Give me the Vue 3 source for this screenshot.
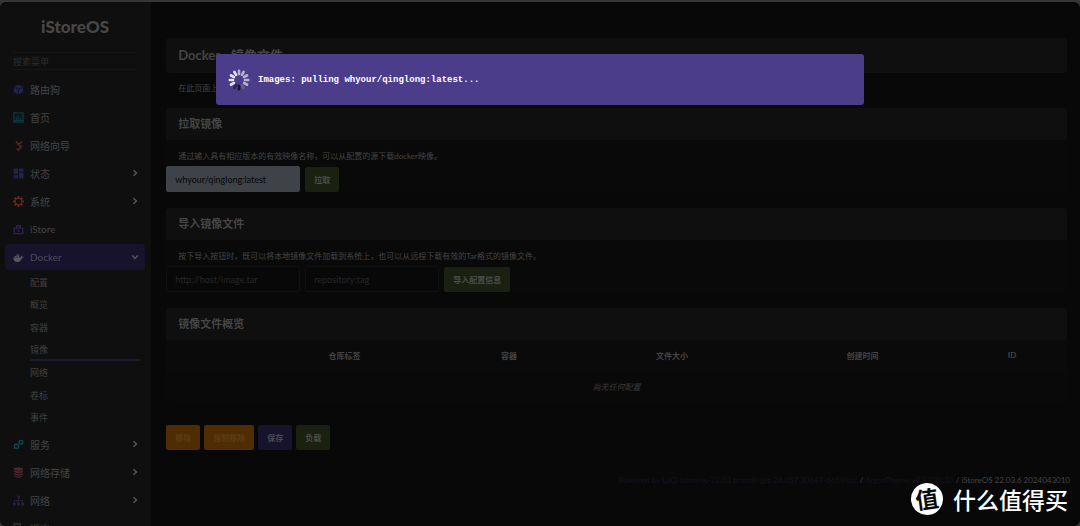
<script setup>
const topMenu = [
  { label: '路由狗', icon: 'cube' },
  { label: '首页', icon: 'chart' },
  { label: '网络向导', icon: 'guide' },
  { label: '状态', icon: 'dash', more: true },
  { label: '系统', icon: 'gear', more: true },
  { label: 'iStore', icon: 'bag' },
  { label: 'Docker', icon: 'whale', open: true,
    children: ['配置', '概览', '容器', '镜像', '网络', '卷标', '事件'] },
  { label: '服务', icon: 'cogs', more: true },
  { label: '网络存储', icon: 'disks', more: true },
  { label: '网络', icon: 'tree', more: true },
  { label: '退出', icon: 'exit' }
]
const activeChild = '镜像'
const columns = ['', '仓库标签', '容器', '文件大小', '创建时间', 'ID']
const teeth = [0, 45, 90, 135, 180, 225, 270, 315]
const spokes = Array.from({ length: 12 }, (_, i) => ({
  angle: i * 30,
  color: i === 5 ? '#6a5f86' : i === 6 ? '#17122e' : i === 7 ? '#2c2450' : i < 5 ? '#b9b1d2' : '#e4e0f0'
}))
</script>

<template>
  <div class="frame">
    <div class="app">
      <aside class="side">
        <a class="brand" href="#">iStoreOS</a>
        <input class="search" type="text" placeholder="搜索菜单" aria-label="搜索菜单">
        <nav>
          <ul class="menu">
            <li v-for="m in topMenu" :key="m.icon">
              <a href="#" class="item" :class="{ open: m.open }">
                <svg class="ico" viewBox="0 0 12 12" aria-hidden="true">
                  <g v-if="m.icon === 'cube'">
                    <path fill="#20234f" d="M6 .5 11 3v5.8L6 11.5 1 8.800V3z" />
                    <path d="M1.500 3.400 6 5.600l4.500-2.200M6 5.600v5.400" fill="none" stroke="#0f0f12" stroke-width=".8" />
                  </g>
                  <g v-else-if="m.icon === 'chart'" fill="none" stroke="#0c4048" stroke-width="1.200">
                    <rect x="1" y="1" width="10" height="10" />
                    <path d="M3.500 5v4M5.700 3.500V9M8 6v3M9 3.500v1" />
                    <path d="M1 9.500h10" />
                  </g>
                  <g v-else-if="m.icon === 'guide'" fill="none" stroke="#57231b" stroke-width="1.700">
                    <path d="M3.200 1.300 5.500 4.500 10 2M5.500 4.500 9 7.200 6.200 10.800 4 9.500" />
                  </g>
                  <g v-else-if="m.icon === 'dash'" fill="#20234f">
                    <path d="M.5.500h5v6h-5zM6.500.500h5v3.500h-5zM.5 7.500h5v4h-5zM6.500 5h5v6.500h-5z" />
                  </g>
                  <g v-else-if="m.icon === 'gear'">
                    <circle cx="6" cy="6" r="3.700" fill="none" stroke="#6a291c" stroke-width="1.400" />
                    <rect v-for="t in teeth" :key="t" x="5" y="0" width="2" height="2" fill="#6a291c"
                      :transform="`rotate(${t} 6 6)`" />
                  </g>
                  <g v-else-if="m.icon === 'bag'" fill="none" stroke="#2a2150" stroke-width="1.600">
                    <path d="M1.300 4.500h9.400v6H1.300zM4 4.500V2h4v2.500" />
                    <path d="M6 6v3M4.500 7.500h3" stroke-width="1" />
                  </g>
                  <g v-else-if="m.icon === 'whale'" fill="#58565f">
                    <path d="M.5 6h8.300c-.3-1 0-1.700.5-2.200.5.400.8.800.8 1.400.6-.1 1.200 0 1.600.3-.4.900-1 1.200-1.900 1.200C9 9.200 7.200 11 4.400 11 1.700 11 .4 9 .5 6zM1.800 4.400h1.500v1.300H1.800zM3.600 4.400h1.500v1.300H3.600zM5.400 4.400h1.500v1.300H5.400zM3.600 2.800h1.500v1.300H3.600zM5.400 2.800h1.500v1.300H5.400z" />
                  </g>
                  <g v-else-if="m.icon === 'cogs'" fill="none" stroke="#0c4650" stroke-width="1.500">
                    <circle cx="3.800" cy="8" r="2.300" /><circle cx="8.700" cy="3.500" r="2" />
                    <path d="M1 10.500l1-1M6 11l-1-1M11 1l-1 1M11.300 5.500l-1-.8" stroke-width="1" />
                  </g>
                  <g v-else-if="m.icon === 'disks'" fill="#4d262b">
                    <ellipse cx="6" cy="2.200" rx="5" ry="1.800" />
                    <path d="M1 3.500c2 1.600 8 1.600 10 0v2c-2 1.600-8 1.600-10 0zM1 6.500c2 1.600 8 1.600 10 0v1.800c-2 1.600-8 1.600-10 0zM1 9.200c2 1.600 8 1.600 10 0v1c-2 2-8 2-10 0z" />
                  </g>
                  <g v-else-if="m.icon === 'tree'" fill="#281f42">
                    <path d="M4.700.5h2.600v3H4.700zM0 8.500h3v3H0zM4.500 8.500h3v3h-3zM9 8.500h3v3H9z" />
                    <path d="M6 3v6M1.500 9V6h9v3" fill="none" stroke="#281f42" />
                  </g>
                  <g v-else fill="none" stroke="#3a3a3a" stroke-width="1.200">
                    <path d="M8 4V1H1v10h7V8M5 6h6M9 4l2 2-2 2" />
                  </g>
                </svg>
                <span>{{ m.label }}</span>
                <svg v-if="m.more" class="chev" viewBox="0 0 8 8" aria-hidden="true"><path d="M2.500 1.200 5.500 4 2.500 6.800" /></svg>
                <svg v-else-if="m.open" class="chev" viewBox="0 0 8 8" aria-hidden="true"><path d="M1.200 2.500 4 5.500 6.800 2.500" /></svg>
              </a>
              <ul v-if="m.children" class="sub">
                <li v-for="c in m.children" :key="c">
                  <a href="#" :class="{ on: c === activeChild }">{{ c }}</a>
                </li>
              </ul>
            </li>
          </ul>
        </nav>
      </aside>

      <main class="main">
        <h2 class="title">Docker - 镜像文件</h2>
        <p class="lead">在此页面上</p>

        <section class="card">
          <h3>拉取镜像</h3>
          <p>通过输入具有相应版本的有效映像名称，可以从配置的源下载docker映像。</p>
          <div class="row">
            <input class="field filled" type="text" value="whyour/qinglong:latest" aria-label="映像名称">
            <button class="btn green" type="button">拉取</button>
          </div>
        </section>

        <section class="card">
          <h3>导入镜像文件</h3>
          <p>按下导入按钮时，既可以将本地镜像文件加载到系统上，也可以从远程下载有效的Tar格式的镜像文件。</p>
          <div class="row">
            <input class="field" type="text" placeholder="http://host/image.tar" aria-label="镜像地址">
            <input class="field" type="text" placeholder="repository:tag" aria-label="标签">
            <button class="btn green" type="button">导入配置信息</button>
          </div>
        </section>

        <section class="card">
          <h3>镜像文件概览</h3>
          <table>
            <colgroup>
              <col class="c0"><col class="c1"><col class="c2"><col class="c3"><col class="c4"><col class="c5">
            </colgroup>
            <thead>
              <tr><th v-for="c in columns" :key="c" scope="col">{{ c }}</th></tr>
            </thead>
            <tbody>
              <tr><td colspan="6"><em>尚无任何配置</em></td></tr>
            </tbody>
          </table>
        </section>

        <div class="row actions">
          <button class="btn orange" type="button">移除</button>
          <button class="btn orange" type="button">强制移除</button>
          <button class="btn violet" type="button">保存</button>
          <button class="btn green" type="button">负载</button>
        </div>

        <footer>
          <a href="#">Powered by LuCI istoreos-22.03 branch (git-24.057.30647-6659faa)</a> /
          <a href="#">ArgonTheme v2.3.030.10</a> / iStoreOS 22.03.6 2024043010
        </footer>
      </main>
    </div>

    <div class="dialog" role="alertdialog" aria-label="Images">
      <svg class="spin" viewBox="-12 -12 24 24" aria-hidden="true">
        <rect v-for="s in spokes" :key="s.angle" x="-1.300" y="-10.500" width="2.600" height="5.800" rx="1"
          :fill="s.color" :transform="`rotate(${s.angle})`" />
      </svg>
      <span>Images: pulling whyour/qinglong:latest...</span>
    </div>

    <div class="mark">
      <span class="seal">值</span>
      <span>什么值得买</span>
    </div>
  </div>
</template>

<style>
body { margin: 0; background: #363636; }
</style>

<style scoped>
* { box-sizing: border-box; }
.frame {
  position: relative;
  height: 100vh;
  padding-top: 2px;
  overflow: hidden;
  background: #363636;
  font-family: "Lato", "Noto Sans CJK SC", sans-serif;
  color: #444;
}
a { color: inherit; text-decoration: none; }
ul { list-style: none; margin: 0; padding: 0; }
input, button { font-family: inherit; }
.app {
  display: flex;
  height: 100%;
  overflow: hidden;
  border-radius: 6px;
  background: #080808;
}
.side {
  flex: 0 0 14%;
  display: flex;
  flex-direction: column;
  background: #0f0f0f;
  padding: 13px 6px 0 5px;
}
.brand {
  align-self: center;
  font-size: 17px;
  line-height: 24px;
  font-weight: 900;
  color: #474747;
}
.search {
  flex: none;
  height: 18px;
  margin: 13px 8px 5px;
  padding: 0;
  border: solid #161616;
  border-width: 1px 0;
  background: transparent;
  font-size: 9px;
  color: #444;
}
.search::placeholder { color: #2d2d2d; opacity: 1; }
.menu > li { padding: 1px 0; }
.item {
  display: flex;
  align-items: center;
  height: 26px;
  padding: 0 6px 0 8px;
  border-radius: 4px;
  font-size: 10px;
}
.item span { flex: 1; }
.item.open { background: #18132c; color: #4b4857; }
.ico { width: 11px; height: 11px; margin-right: 6px; }
.chev { width: 8px; height: 8px; fill: none; stroke: #555; stroke-width: 1.5px; }
.sub {
  display: grid;
  grid-auto-rows: 1fr;
  min-height: 159px;
  padding: 1px 5px 0 25px;
}
.sub a {
  display: flex;
  align-items: center;
  height: 100%;
  font-size: 9px;
  color: #404040;
  border-bottom: 2px solid transparent;
  padding-top: 2px;
}
.sub a.on { border-color: #1b1a35; }
.main { flex: 1; min-width: 0; padding: 36px 13px 0 15px; }
h2, h3, p { margin: 0; }
.title {
  height: 35px;
  padding-left: 12px;
  border-radius: 3px;
  background: #0f0f0f;
  font-size: 13px;
  line-height: 34px;
  font-weight: 700;
  color: #454545;
}
.lead { padding: 9px 12px 14px; font-size: 8px; line-height: 12px; }
.card { margin-bottom: 16px; background: #090909; border-radius: 3px; }
.card h3 {
  height: 32px;
  padding-left: 12px;
  border-radius: 3px 3px 0 0;
  background: #0f0f0f;
  font-size: 11px;
  line-height: 32px;
  color: #454545;
}
.card p { padding: 10px 12px 4px; font-size: 8px; line-height: 12px; }
.row { display: flex; align-items: center; gap: 5px; }
.field {
  width: 134px;
  height: 26px;
  padding: 0 8px;
  border: 1px solid #101010;
  border-radius: 2px;
  background: #080808;
  font-size: 9px;
  color: #444;
}
.field::placeholder { color: #262626; opacity: 1; }
.field.filled { background: #3f4247; border-color: #3f4247; color: #08080a; }
.btn {
  height: 25px;
  padding: 0 9px;
  border: 0;
  border-radius: 2px;
  font-size: 8px;
  font-weight: 700;
  color: #4c4c4c;
}
.green { background: #1b2110; }
.orange { background: #4f2c02; color: #5c3c18; }
.violet { background: #18132c; }
table { width: 100%; border-collapse: collapse; table-layout: fixed; font-size: 8px; }
.c0 { width: 9%; }
.c1 { width: 21.6%; }
.c2 { width: 14.9%; }
.c3 { width: 21.3%; }
.c4 { width: 21%; }
.c5 { width: 12.2%; }
th { height: 30px; padding: 0; text-align: center; background: #0a0a0a; }
td { height: 32px; padding: 0; text-align: center; color: #3c3c3c; }
.actions { gap: 4px; padding-top: 7px; }
footer {
  margin-top: 24px;
  margin-right: -3px;
  font-size: 8px;
  line-height: 12px;
  text-align: right;
}
footer a { color: #15131f; }
.dialog {
  position: absolute;
  left: 20%;
  right: 20%;
  top: 54px;
  display: flex;
  align-items: center;
  gap: 7px;
  height: 51px;
  padding: 0 11px;
  border-radius: 3px;
  background: #4b3d89;
  color: #fff;
  font: 700 9px/12px "Liberation Mono", monospace;
}
.spin { width: 24px; height: 24px; }
.mark {
  position: absolute;
  right: 12px;
  bottom: 11px;
  display: flex;
  align-items: center;
  gap: 10px;
  color: #fff;
  font-size: 23px;
  line-height: 30px;
  font-weight: 500;
  font-family: "Noto Sans CJK SC", sans-serif;
}
.seal {
  width: 32px;
  height: 32px;
  border-radius: 50%;
  background: #fff;
  color: #080808;
  font-weight: 700;
  text-align: center;
  transform: rotate(-8deg);
}
</style>
